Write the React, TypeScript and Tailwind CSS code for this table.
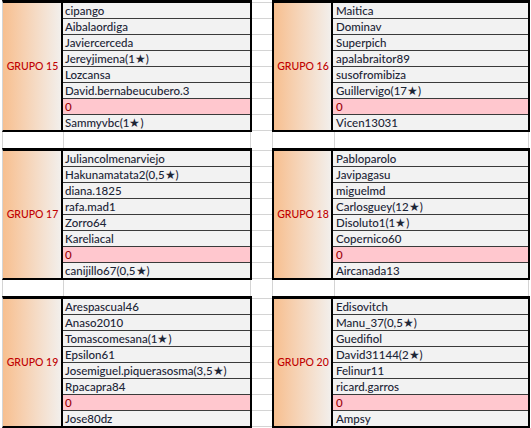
const groups = [
  {
    label: 'GRUPO 15',
    names: ['cipango', 'Aibalaordiga', 'Javiercerceda', 'Jereyjimena(1★)', 'Lozcansa', 'David.bernabeucubero.3', '0', 'Sammyvbc(1★)'],
  },
  {
    label: 'GRUPO 16',
    names: ['Maitica', 'Dominav', 'Superpich', 'apalabraitor89', 'susofromibiza', 'Guillervigo(17★)', '0', 'Vicen13031'],
  },
  {
    label: 'GRUPO 17',
    names: ['Juliancolmenarviejo', 'Hakunamatata2(0,5★)', 'diana.1825', 'rafa.mad1', 'Zorro64', 'Kareliacal', '0', 'canijillo67(0,5★)'],
  },
  {
    label: 'GRUPO 18',
    names: ['Pabloparolo', 'Javipagasu', 'miguelmd', 'Carlosguey(12★)', 'Disoluto1(1★)', 'Copernico60', '0', 'Aircanada13'],
  },
  {
    label: 'GRUPO 19',
    names: ['Arespascual46', 'Anaso2010', 'Tomascomesana(1★)', 'Epsilon61', 'Josemiguel.piquerasosma(3,5★)', 'Rpacapra84', '0', 'Jose80dz'],
  },
  {
    label: 'GRUPO 20',
    names: ['Edisovitch', 'Manu_37(0,5★)', 'Guedifiol', 'David31144(2★)', 'Felinur11', 'ricard.garros', '0', 'Ampsy'],
  },
];

function Block({ group, left }: { group: (typeof groups)[0]; left: boolean }) {
  return (
    <div
      className={`flex h-[132px] border-t-[3px] border-b-2 border-r-2 border-black ${
        left ? 'w-[250px] border-l border-l-[#d4d4d4]' : 'w-[258px] border-l-2'
      }`}
    >
      {/* group label with gradient fill */}
      <div
        className={`flex items-center justify-center border-r-2 border-black bg-gradient-to-r from-[#f7bf8f] to-[#f2efec] pl-px text-[10.5px] text-[#c00000] ${
          left ? 'w-[60px]' : 'w-[59px]'
        }`}
      >
        {group.label}
      </div>

      {/* names */}
      <div className="flex flex-1 flex-col bg-[#f2f2f2]">
        {group.names.map((name, i) => {
          const last = i === group.names.length - 1;
          const zero = name === '0';
          return (
            <div
              key={i}
              className={`flex items-center whitespace-nowrap ${left ? 'pl-[2px]' : 'pl-[3px]'} ${
                last ? 'h-[15px]' : 'h-4 border-b border-[#3a3a3a]'
              } ${zero ? 'bg-[#ffc7ce] text-[#9c0006]' : 'text-[#1c2536]'}`}
            >
              {name}
            </div>
          );
        })}
      </div>
    </div>
  );
}

function GapColumn() {
  return (
    <div className="flex w-[20px] flex-col pt-[2px]">
      {Array.from({ length: 8 }).map((_, i) => (
        <div key={i} className="h-4 border-t border-[#d4d4d4]" />
      ))}
      <div className="h-[2px] border-t border-[#d4d4d4]" />
    </div>
  );
}

function GapRow() {
  return (
    <div className="flex h-4">
      <div className="w-[2px]" />
      <div className="w-[62px] border-l border-r border-[#d4d4d4]" />
      <div className="w-[187px] border-r border-[#d4d4d4]" />
      <div className="w-[22px] border-r border-[#d4d4d4]" />
      <div className="w-[62px] border-r border-[#d4d4d4]" />
      <div className="w-[194px] border-r border-[#d4d4d4]" />
    </div>
  );
}

export default function App() {
  const bands = [0, 2, 4];
  return (
    <div className="h-[428px] w-[531px] overflow-hidden bg-white font-['Lato',sans-serif] text-[11.5px] font-medium">
      {bands.map((b, idx) => (
        <div key={b}>
          <div className="flex">
            <div className="w-[2px]" />
            <Block group={groups[b]} left />
            <GapColumn />
            <Block group={groups[b + 1]} left={false} />
          </div>
          {idx < bands.length - 1 && <GapRow />}
        </div>
      ))}
    </div>
  );
}
